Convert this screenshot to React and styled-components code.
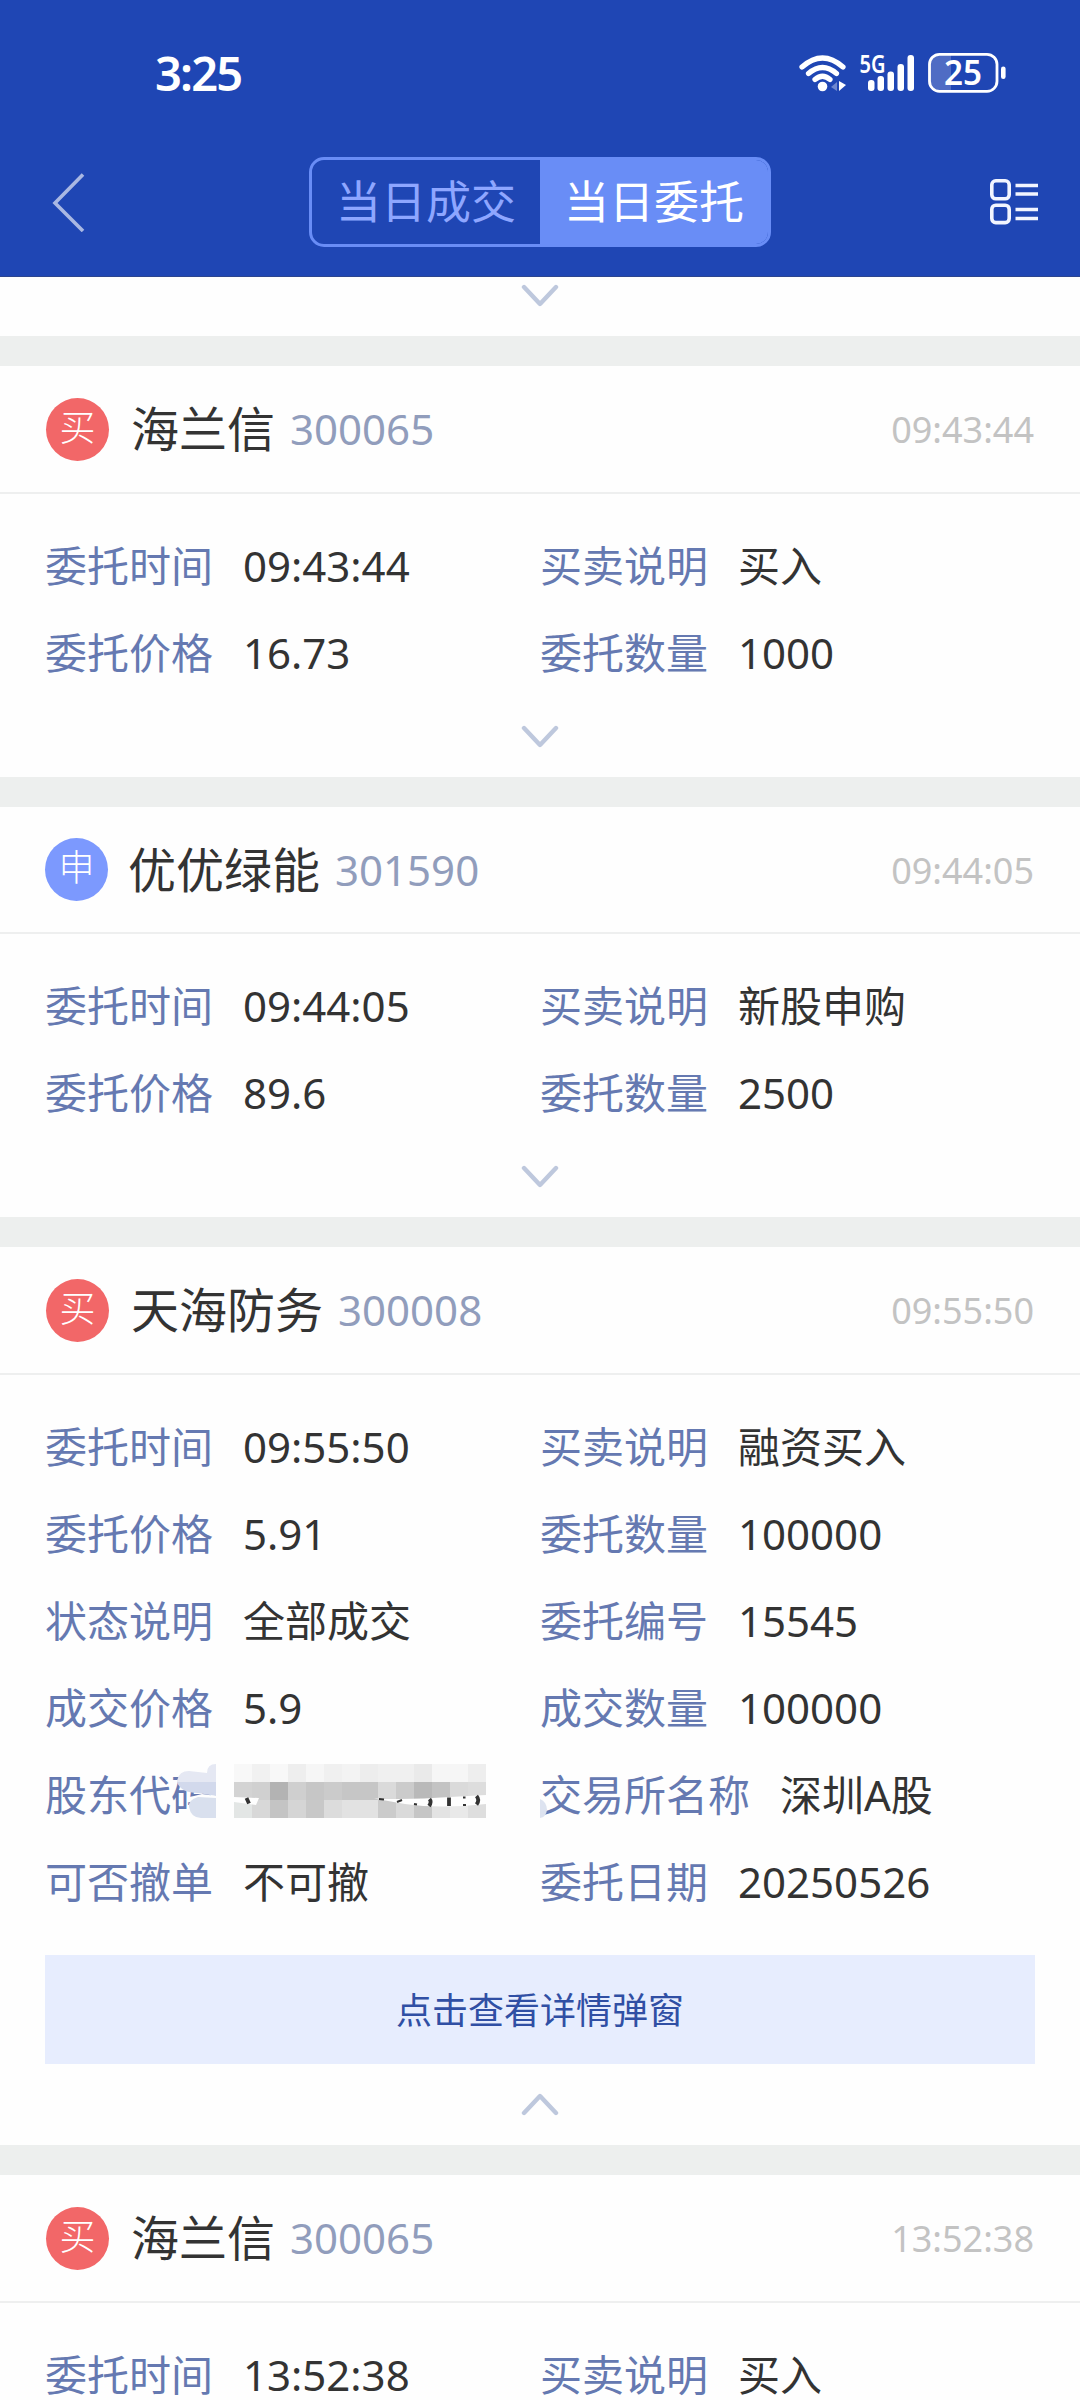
import React from 'react';
import styled, { createGlobalStyle } from 'styled-components';

const GlobalStyle = createGlobalStyle`
  * {
    box-sizing: border-box;
  }

  body {
    margin: 0;
    background: #ffffff;
    font-family: 'Noto Sans', 'Noto Sans CJK SC', sans-serif;
  }
`;

const Page = styled.div`
  width: 1080px;
  height: 2400px;
  overflow: hidden;
  background: #fefefe;
`;

const TopArea = styled.header`
  height: 277px;
  background: #1f46b4;
  border-bottom: 1px solid #2c458f;
`;

const StatusBar = styled.div`
  display: flex;
  align-items: center;
  justify-content: space-between;
  height: 146px;
  padding: 0 73px 0 155px;
`;

const Clock = styled.span`
  color: #ffffff;
  font-size: 47px;
  line-height: 60px;
  font-weight: 600;
  letter-spacing: -1.8px;
`;

const StatusIcons = styled.svg`
  width: 210px;
  height: 42px;
  margin-top: 2px;
  overflow: visible;
`;

const NavBar = styled.nav`
  display: flex;
  align-items: center;
  justify-content: space-between;
  height: 112px;
  padding: 0 41px 0 52px;
`;

const BackIcon = styled.svg`
  width: 34px;
  height: 60px;
`;

const MenuIcon = styled.svg`
  width: 50px;
  height: 48px;
  margin-bottom: 2px;
`;

const Tabs = styled.div`
  display: flex;
  width: 462px;
  height: 90px;
  margin-left: 5px;
  border: 3px solid #698df6;
  border-radius: 15px;
  overflow: hidden;
`;

const Tab = styled.div`
  flex: 1;
  color: ${({ $active }) => ($active ? '#ffffff' : '#8ea6ff')};
  background: ${({ $active }) => ($active ? '#698df6' : 'transparent')};
  font-size: 45px;
  line-height: 84px;
  text-align: center;
`;

const Card = styled.section`
  border-bottom: 30px solid #edefee;
`;

const CardHead = styled.div`
  display: flex;
  align-items: center;
  height: ${({ $apply }) => ($apply ? 127 : 128)}px;
  padding: 0 46px 0 45px;
  border-bottom: 2px solid #eeefef;
`;

const Badge = styled.span`
  width: 63px;
  height: 63px;
  margin-left: ${({ $apply }) => ($apply ? 0 : 1)}px;
  margin-right: ${({ $apply }) => ($apply ? 20 : 22)}px;
  border-radius: 50%;
  background: ${({ $apply }) => ($apply ? '#7c99fe' : '#f26768')};
  color: #ffffff;
  font-size: 36px;
  font-weight: 300;
  line-height: 60px;
  text-align: center;
`;

const StockName = styled.span`
  color: #333333;
  font-size: 48px;
  line-height: 60px;
`;

const StockCode = styled.span`
  flex: 1;
  margin-left: 15px;
  color: #919dbc;
  font-size: 42px;
  line-height: 60px;
`;

const HeadTime = styled.span`
  padding-top: 2px;
  color: #c3c3c3;
  font-size: 36px;
  line-height: 60px;
`;

const Details = styled.div`
  display: grid;
  grid-template-columns: 495px 1fr;
  grid-auto-rows: 87px;
  padding: 28px 0 0 45px;
`;

const Field = styled.div`
  display: flex;
  align-items: center;
  font-size: 42px;
  line-height: 60px;
  white-space: nowrap;
`;

const Label = styled.span`
  color: #6579b1;
`;

const Value = styled.span`
  margin-left: 30px;
  color: #333333;
`;

// sits over the end of the label and the start of the next column
const Covered = styled.div`
  position: relative;
  width: 0;
  height: 100px;
  margin: -9px 0 0 -53px;
`;

const Mosaic = styled.svg`
  position: absolute;
  left: 0;
  top: 0;
  width: 390px;
  height: 100px;
  z-index: 1;
`;

const DetailButton = styled.button`
  display: block;
  width: 990px;
  height: 109px;
  margin: 30px auto 0;
  padding: 0 0 3px;
  border: none;
  background: #e7edfe;
  color: #304fa4;
  font-family: inherit;
  font-size: 36px;
`;

const Toggle = styled.div`
  display: flex;
  justify-content: center;
  padding-top: ${({ $top }) => $top}px;
  height: ${({ $height }) => $height}px;
`;

const Chevron = ({ up }) => (
  <svg width="40" height="24" viewBox="0 0 40 24">
    <path
      d={up ? 'M4 21 L20 4 L36 21' : 'M4 3 L20 20 L36 3'}
      fill="none"
      stroke="#bec8dd"
      strokeWidth="4.4"
      strokeLinecap="round"
      strokeLinejoin="round"
    />
  </svg>
);

// [x, y, width, height, colour]
const blocks = [
  [74, 24, 18, 18, '#f8f8f8'], [92, 24, 18, 18, '#f1f1f1'], [110, 24, 18, 18, '#f8f8f8'],
  [128, 24, 18, 18, '#eeeeee'], [146, 24, 18, 18, '#f6f6f6'], [164, 24, 18, 18, '#f0f0f0'],
  [182, 24, 18, 18, '#f3f3f3'], [200, 24, 18, 18, '#ededed'], [218, 24, 36, 18, '#f0f0f0'],
  [254, 24, 18, 18, '#eaeaea'], [272, 24, 36, 18, '#f6f6f6'], [308, 24, 18, 18, '#eeeeee'],
  [74, 42, 18, 18, '#d3d3d3'], [92, 42, 18, 18, '#d0d0d0'], [110, 42, 18, 18, '#b3b3b3'],
  [128, 42, 18, 18, '#cfcfcf'], [146, 42, 18, 18, '#c6c6c6'], [164, 42, 18, 18, '#cbcbcb'],
  [182, 42, 36, 18, '#c6c6c6'], [218, 42, 18, 18, '#dadada'], [236, 42, 18, 18, '#cbcbcb'],
  [254, 42, 18, 18, '#b9b9b9'], [272, 42, 18, 18, '#c3c3c3'], [290, 42, 18, 18, '#dadada'],
  [308, 42, 18, 18, '#dddddd'],
  [74, 60, 18, 18, '#e3e6e5'], [92, 60, 18, 18, '#d8d8d8'], [110, 60, 18, 18, '#c4c4c4'],
  [128, 60, 18, 18, '#d5d5d5'], [146, 60, 18, 18, '#c8c8c8'], [164, 60, 18, 18, '#dcdcdc'],
  [182, 60, 36, 18, '#e2e2e2'], [218, 60, 18, 18, '#cbcbcb'], [236, 60, 18, 18, '#dadada'],
  [254, 60, 18, 18, '#c6c6c6'], [272, 60, 18, 18, '#e3e3e3'], [290, 60, 18, 18, '#e9e9e9'],
  [308, 60, 18, 18, '#dedede'],
];

const HiddenValue = () => (
  <Covered>
    <Mosaic viewBox="0 0 390 100">
      <rect x="56" y="24" width="18" height="54" fill="#fefefe" />
      <path d="M17 42 Q18 31 29 31 L47 33 Q47 24 56 24 V42 Z" fill="#e5e8f3" />
      <path d="M17 42 H56 V56 L38 53 Q21 53 17 42 Z" fill="#d2d9ec" />
      <path d="M42 54 L56 56 V60 L30 57 Z" fill="#fefefe" />
      <path d="M56 58 L38 57 Q28 60 29 67 Q31 78 41 78 H56 Z" fill="#d9e0ee" />
      {blocks.map(([x, y, w, h, fill]) => (
        <rect key={`${x}-${y}`} x={x} y={y} width={w} height={h} fill={fill} />
      ))}
      <path d="M56 56 L74 57 L99 58 L96 65 L74 62 L56 60 Z" fill="#fefefe" />
      <path d="M214 58.500 Q250 60 290 57 L326 55 V64 Q280 69 245 64 Z" fill="#fefefe" />
      <g fill="none" stroke="#333333" strokeWidth="3.800">
        <path d="M86.500 58 L89 63.500" />
        <path d="M269.500 59 Q272 62 269 66" />
        <path d="M289 57.500 V66" />
        <path d="M316.500 56 Q320 60 316.500 64.500" />
      </g>
      <g fill="none" stroke="#333333" strokeWidth="2">
        <path d="M219 59 L224 59.500" />
        <path d="M237 62 L242 60" />
        <path d="M254 64 L257 64.500" />
        <path d="M303 57.500 H305.500" />
        <path d="M303 65 H306" />
      </g>
      <path d="M380 59 Q387 62 387 70 Q386 77 380 78 Z" fill="#dde3f0" />
    </Mosaic>
  </Covered>
);

const StatusGroup = () => (
  <StatusIcons viewBox="797 53 210 42">
    <g fill="none" stroke="#ffffff" strokeWidth="5.2" strokeLinecap="round">
      <path d="M802 67 Q822.500 49 843 67" />
      <path d="M808.500 73.500 Q822.500 61.500 836.500 73.500" />
      <path d="M815 79.500 Q822.500 73 830 79.500" />
    </g>
    <circle cx="822.500" cy="86.500" r="4.800" fill="#ffffff" />
    <path d="M837 82 V91 L831 87 Z" fill="#6f88cf" />
    <path d="M839 81 L846 85 L839 91 Z" fill="#ffffff" />
    <text x="859.500" y="73" fill="#ffffff" fontSize="25" fontWeight="600" textLength="26" lengthAdjust="spacingAndGlyphs">5G</text>
    <g fill="#ffffff">
      <rect x="868" y="80" width="6.500" height="11" rx="3" />
      <rect x="877.500" y="76" width="6.500" height="15" rx="3" />
      <rect x="887.500" y="71.500" width="6.500" height="19.500" rx="3" />
      <rect x="897.500" y="64" width="6.500" height="27" rx="3" />
      <rect x="907.500" y="55" width="6.500" height="36" rx="3" />
    </g>
    <path d="M940 54.500 H951 V91.500 H940 Q930 91.500 930 82 V64 Q930 54.500 940 54.500 Z" fill="#4f6cc4" />
    <rect x="929.500" y="54.300" width="67.500" height="37" rx="10" fill="none" stroke="#ffffff" strokeWidth="2.800" />
    <rect x="1001" y="66.500" width="4.600" height="12.500" rx="2.300" fill="#ffffff" />
    <text x="944" y="85" fill="#ffffff" fontSize="34" fontWeight="600" textLength="38" lengthAdjust="spacingAndGlyphs">25</text>
  </StatusIcons>
);

const orders = [
  {
    name: '海兰信',
    code: '300065',
    time: '09:43:44',
    fields: [
      ['委托时间', '09:43:44'],
      ['买卖说明', '买入'],
      ['委托价格', '16.73'],
      ['委托数量', '1000'],
    ],
  },
  {
    name: '优优绿能',
    code: '301590',
    time: '09:44:05',
    apply: true,
    fields: [
      ['委托时间', '09:44:05'],
      ['买卖说明', '新股申购'],
      ['委托价格', '89.6'],
      ['委托数量', '2500'],
    ],
  },
  {
    name: '天海防务',
    code: '300008',
    time: '09:55:50',
    expanded: true,
    fields: [
      ['委托时间', '09:55:50'],
      ['买卖说明', '融资买入'],
      ['委托价格', '5.91'],
      ['委托数量', '100000'],
      ['状态说明', '全部成交'],
      ['委托编号', '15545'],
      ['成交价格', '5.9'],
      ['成交数量', '100000'],
      ['股东代码', null],
      ['交易所名称', '深圳A股'],
      ['可否撤单', '不可撤'],
      ['委托日期', '20250526'],
    ],
  },
  {
    name: '海兰信',
    code: '300065',
    time: '13:52:38',
    fields: [
      ['委托时间', '13:52:38'],
      ['买卖说明', '买入'],
    ],
  },
];

const Order = ({ order }) => (
  <Card>
    <CardHead $apply={order.apply}>
      <Badge $apply={order.apply}>{order.apply ? '申' : '买'}</Badge>
      <StockName>{order.name}</StockName>
      <StockCode>{order.code}</StockCode>
      <HeadTime>{order.time}</HeadTime>
    </CardHead>
    <Details>
      {order.fields.map(([label, value]) => (
        <Field key={label}>
          <Label>{label}</Label>
          {value === null ? <HiddenValue /> : <Value>{value}</Value>}
        </Field>
      ))}
    </Details>
    {order.expanded && <DetailButton>点击查看详情弹窗</DetailButton>}
    <Toggle $top={order.expanded ? 28 : 29} $height={81}>
      <Chevron up={order.expanded} />
    </Toggle>
  </Card>
);

export default function App() {
  return (
    <>
      <GlobalStyle />
      <Page>
        <TopArea>
          <StatusBar>
            <Clock>3:25</Clock>
            <StatusGroup />
          </StatusBar>
          <NavBar>
            <BackIcon viewBox="0 0 34 60" fill="none" stroke="#a9b8e3" strokeWidth="3.6">
              <path d="M31 2.500 L3 31 L31 59" />
            </BackIcon>
            <Tabs>
              <Tab>当日成交</Tab>
              <Tab $active>当日委托</Tab>
            </Tabs>
            <MenuIcon viewBox="0 0 50 48" fill="none" stroke="#f2f5ff" strokeWidth="3.6">
              <rect x="2.800" y="3.800" width="17.400" height="18" rx="4" />
              <rect x="2.800" y="28.200" width="17.400" height="17.400" rx="4" />
              <path d="M26.500 8.500 H49 M26.500 17 H49 M26.500 32.500 H49 M26.500 41.500 H49" />
            </MenuIcon>
          </NavBar>
        </TopArea>
        <Card>
          <Toggle $top={7} $height={59}>
            <Chevron />
          </Toggle>
        </Card>
        {orders.map((order) => (
          <Order key={order.time} order={order} />
        ))}
      </Page>
    </>
  );
}
